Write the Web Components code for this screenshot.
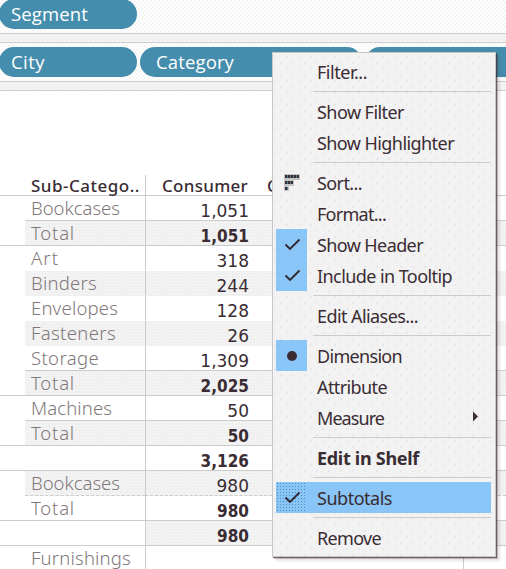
<!DOCTYPE html>
<html lang="en"><head><meta charset="utf-8"><title>Worksheet</title>
<style>html,body{margin:0;width:506px;height:569px;overflow:hidden;background:#fff}</style></head>
<body><work-sheet></work-sheet>
<script>
const define=(name,html,setup)=>customElements.define(name,class extends HTMLElement{
  connectedCallback(){
    if(this.shadowRoot)return;
    this.attachShadow({mode:'open'}).innerHTML=html;
    if(setup)setup(this,this.shadowRoot);
  }
});

/* Text spaced out or tightened to a given advance width */
define('fit-text',`<style>:host{display:inline-block;white-space:nowrap}span{display:inline-block}</style><span><slot></slot></span>`,(el,root)=>{
  const s=root.querySelector('span'),w=+el.getAttribute('w'),n=el.textContent.length;
  if(w)s.style.letterSpacing=((w-s.getBoundingClientRect().width)/n).toFixed(3)+'px';
});

define('shelf-pill',`<style>
:host{display:block;box-sizing:border-box;flex:none;height:30px;border-radius:15px;background:#458dac;color:#fff;font:18.5px/29px "Open Sans",sans-serif;padding-left:var(--pad,16px)}
</style><slot></slot>`);

define('shelf-row',`<style>
:host{display:flex;box-sizing:border-box;gap:3px;background:repeating-conic-gradient(#f6f6f6 0 25%,#fff 0 50%) 0 0/4px 4px;overflow:hidden}
</style><slot></slot>`);

define('shelf-gap',`<style>:host{display:block;box-sizing:border-box;height:10px;border:solid #ccc;border-width:1px 0;background:radial-gradient(circle,#fff 0 .6px,#f0f0f0 .8px) 0 0/3px 3px}</style>`);

define('data-row',`<style>
:host{display:grid;grid-template-columns:25px 120px 1fr;height:25px;box-sizing:border-box;font:18.5px/23px "Noto Sans",sans-serif}
div{box-sizing:border-box;border-bottom:1px solid transparent;height:25px}
.b{padding-left:6px;color:#7f777a;font-weight:300;line-height:23px}
.c{border-left:1px solid #ccc}
.n{display:block;width:103px;text-align:right;color:#3a2c33;font:17px/31px "DejaVu Sans",sans-serif}
:host([bold]) .n{font-family:"DejaVu Sans Condensed","DejaVu Sans",sans-serif;font-stretch:condensed;font-weight:700}
:host([band]) .c,:host([band=all]) .b{background:radial-gradient(circle,#fafafa 0 .6px,#f0f0f0 .8px) 0 0/3px 3px}
:host([line]) .b,:host([line]) .c,:host([line=full]) .a{border-bottom-color:#ccc}
:host([dash]) .b,:host([dash]) .c{border-bottom-style:dashed}
</style><div class="a"></div><div class="b"><slot></slot></div><div class="c"><span class="n"></span></div>`,(el,r)=>{r.querySelector('.n').textContent=el.getAttribute('n')||''});

define('data-table',`<style>
:host{display:block;height:478px}
header{display:grid;grid-template-columns:25px 120px 1fr;height:105px;padding-top:84px;box-sizing:border-box;border-bottom:1px solid #ccc;color:#3a2c33;font:500 17px/21px "Noto Sans",sans-serif}
.s{padding-left:6px}.h{border-left:1px solid #ccc;padding-left:16px;display:flex;gap:19px}
</style><header><i></i><div class="s"><fit-text w="109">Sub-Catego..</fit-text></div><div class="h"><fit-text w="86">Consumer</fit-text><span>C</span></div></header>
<data-row n="1,051" line><fit-text w="89">Bookcases</fit-text></data-row>
<data-row n="1,051" line="full" band="all" bold><fit-text w="44">Total</fit-text></data-row>
<data-row n="318"><fit-text w="28">Art</fit-text></data-row>
<data-row n="244" band="all"><fit-text w="66">Binders</fit-text></data-row>
<data-row n="128"><fit-text w="87">Envelopes</fit-text></data-row>
<data-row n="26" band="all"><fit-text w="85">Fasteners</fit-text></data-row>
<data-row n="1,309" line><fit-text w="68">Storage</fit-text></data-row>
<data-row n="2,025" line="full" band="all" bold><fit-text w="44">Total</fit-text></data-row>
<data-row n="50" line><fit-text w="81">Machines</fit-text></data-row>
<data-row n="50" line="full" band="all" bold><fit-text w="44">Total</fit-text></data-row>
<data-row n="3,126" line="full" bold></data-row>
<data-row n="980" line dash band="all"><fit-text w="89">Bookcases</fit-text></data-row>
<data-row n="980" line="full" bold><fit-text w="44">Total</fit-text></data-row>
<data-row n="980" line="full" band="num" bold></data-row>
<data-row><fit-text w="100">Furnishings</fit-text></data-row>`);

const icons={
 check:'<path d="M9.5 15.5 14 20 23.5 10.5" fill="none" stroke="#30262c" stroke-width="1.8"/>',
 dot:'<circle cx="16" cy="16" r="5" fill="#3a2c33"/>',
 sort:'<path d="M8 7h16v6h-6v6h-5v5H8z" fill="#c4c4c4"/><path d="M9 9.5h14M9 15.5h8M9 21.5h3" stroke="#4a8094" stroke-width="3"/><path d="M9 9.5h14M9 15.5h8M9 21.5h3" stroke="#3a2c33" stroke-width="3" stroke-dasharray="2 1"/>'
};
define('menu-item',`<style>
:host{display:grid;grid-template-columns:31px 10px 1fr 20px;height:31px;color:#3a2c33;font:18px/33px "Noto Sans",sans-serif}
:host([bold]){font-weight:700}
:host([selected]){background:#89c5f6}
:host([icon=check]) .i,:host([icon=dot]) .i{background:#89c5f6}
:host([selected]) .i{background:radial-gradient(circle,#4a8fb5 0 .5px,#89c5f6 .8px) 0 0/3px 3px!important}
svg{display:block}.t{height:31px}
</style><div class="i"><svg width="31" height="31"></svg></div><i></i><div class="t"><slot></slot></div><svg class="m" width="20" height="31"></svg>`,(el,r)=>{
  r.querySelector('.i svg').innerHTML=icons[el.getAttribute('icon')]||'';
  if(el.hasAttribute('submenu'))r.querySelector('.m').innerHTML='<path d="M2 9.5v10L7 14.5z" fill="#3a2c33"/>';
});
define('menu-rule',`<style>:host{display:block;height:1px;margin:4px 0 4px 37px;background:#ccc}</style>`);
define('context-menu',`<style>
:host{display:block;box-sizing:border-box;width:224px;height:505px;border:1px solid #c8c6c7;padding:3px 4px 3px 3px;
background-color:#f2f2f2;background-image:radial-gradient(circle,#d2d2d2 0 .5px,transparent .8px),radial-gradient(circle,#d2d2d2 0 .5px,transparent .8px);background-size:12px 12px,12px 12px;background-position:2px 4px,8px 10px;
box-shadow:1px 1px 0 rgba(60,38,46,.6),2px 2px 0 rgba(60,38,46,.25),4px 4px 2px rgba(60,38,46,.12)}
</style><slot></slot>`);

define('work-sheet',`<style>
:host{display:block;position:relative;width:506px;height:569px;overflow:hidden;background:#fff}
.top{height:33px}.mid{height:38px;padding-top:4px}
.first{width:138px;margin-left:-1px;--pad:12px}.cat{width:222px}.last{width:160px}
.up{margin-top:-1px}
context-menu{position:absolute;left:272px;top:52px}
.tick{position:absolute;left:463px;top:557px;width:1px;height:12px;background:#ccc}
</style>
<shelf-row class="top"><shelf-pill class="first up"><fit-text w="77">Segment</fit-text></shelf-pill></shelf-row>
<shelf-gap></shelf-gap>
<shelf-row class="mid"><shelf-pill class="first"><fit-text w="34">City</fit-text></shelf-pill><shelf-pill class="cat"><fit-text w="78">Category</fit-text></shelf-pill><shelf-pill class="last"></shelf-pill></shelf-row>
<shelf-gap></shelf-gap>
<data-table></data-table>
<div class="tick"></div>
<context-menu>
<menu-item><fit-text w="50">Filter...</fit-text></menu-item><menu-rule></menu-rule>
<menu-item><fit-text w="87">Show Filter</fit-text></menu-item>
<menu-item><fit-text w="137">Show Highlighter</fit-text></menu-item><menu-rule></menu-rule>
<menu-item icon="sort"><fit-text w="45">Sort...</fit-text></menu-item>
<menu-item><fit-text w="69">Format...</fit-text></menu-item>
<menu-item icon="check"><fit-text w="106">Show Header</fit-text></menu-item>
<menu-item icon="check"><fit-text w="135">Include in Tooltip</fit-text></menu-item><menu-rule></menu-rule>
<menu-item><fit-text w="101">Edit Aliases...</fit-text></menu-item><menu-rule></menu-rule>
<menu-item icon="dot"><fit-text w="85">Dimension</fit-text></menu-item>
<menu-item><fit-text w="70">Attribute</fit-text></menu-item>
<menu-item submenu><fit-text w="67">Measure</fit-text></menu-item><menu-rule></menu-rule>
<menu-item bold><fit-text w="102">Edit in Shelf</fit-text></menu-item><menu-rule></menu-rule>
<menu-item icon="check" selected><fit-text w="75">Subtotals</fit-text></menu-item><menu-rule></menu-rule>
<menu-item><fit-text w="64">Remove</fit-text></menu-item>
</context-menu>`);
</script></body></html>
